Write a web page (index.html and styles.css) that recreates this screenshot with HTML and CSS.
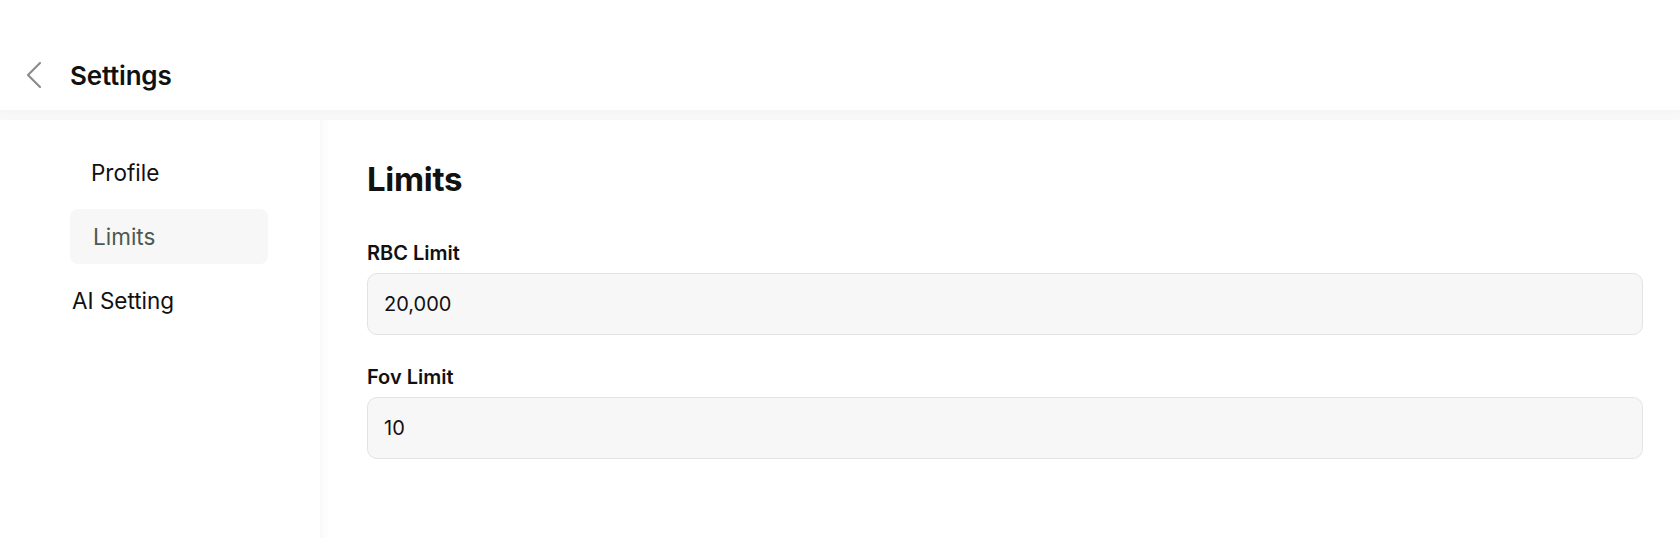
FILE: index.html
```html
<!DOCTYPE html>
<html lang="en">

<head>
    <meta charset="UTF-8">
    <meta name="viewport" content="width=device-width, initial-scale=1.0">
    <title>Settings</title>
    <link rel="stylesheet" href="styles.css">
</head>

<body>

    <header class="topbar">
        <div class="topbar-row">
            <button class="back-btn" aria-label="Back">
                <svg width="18" height="28" viewBox="0 0 18 28" fill="none">
                    <path d="M15 2 L3 14 L15 26" stroke="#8c8c8c" stroke-width="2.2" stroke-linecap="round" stroke-linejoin="round" />
                </svg>
            </button>
            <h1 class="page-title">Settings</h1>
        </div>
    </header>

    <div class="layout">
        <nav class="sidebar">
            <ul class="menu">
                <li class="menu-item sub">Profile</li>
                <li class="menu-item sub active">Limits</li>
                <li class="menu-item">AI Setting</li>
            </ul>
        </nav>

        <main class="content">
            <h2 class="section-title">Limits</h2>

            <div class="field">
                <label for="rbc">RBC Limit</label>
                <input type="text" id="rbc" value="20,000">
            </div>

            <div class="field">
                <label for="fov">Fov Limit</label>
                <input type="text" id="fov" value="10">
            </div>
        </main>
    </div>

</body>

</html>
```

FILE: styles.css
```css
* {
    box-sizing: border-box;
}

body {
    margin: 0;
    height: 538px;
    overflow: hidden;
    background-color: #f8f8f8;
    font-family: Inter, "Noto Sans", sans-serif;
    color: #111;
    display: flex;
    flex-direction: column;
}

.topbar {
    height: 110px;
    background-color: white;
    box-shadow: 0 2px 6px rgba(0, 0, 0, 0.02);
    padding-top: 50px;
    padding-left: 24px;
}

.topbar-row {
    display: flex;
    align-items: center;
    height: 50px;
}

.back-btn {
    border: none;
    background: none;
    padding: 0;
    width: 20px;
    height: 30px;
    display: flex;
    align-items: center;
    justify-content: center;
    margin-right: 26px;
}

.page-title {
    margin: 0;
    font-size: 26px;
    font-weight: 600;
    letter-spacing: -0.2px;
}

.layout {
    flex: 1;
    display: flex;
    margin-top: 10px;
}

.sidebar {
    width: 320px;
    background-color: white;
    padding-top: 25px;
    padding-left: 70px;
}

.menu {
    list-style: none;
    margin: 0;
    padding: 0;
    width: 198px;
    display: flex;
    flex-direction: column;
    gap: 9px;
}

.menu-item {
    height: 55px;
    display: flex;
    align-items: center;
    font-size: 22.5px;
    padding-left: 2px;
}

.menu-item.sub {
    padding-left: 21px;
}

.menu-item.active {
    background-color: #f7f7f7;
    border-radius: 8px;
    color: #4b5a52;
    padding-left: 23px;
}

.content {
    flex: 1;
    background-color: white;
    box-shadow: inset 9px 0 8px -7px rgba(0, 0, 0, 0.04);
    padding: 40px 37px 0 47px;
}

.section-title {
    margin: 0 0 43px 0;
    font-size: 33px;
    line-height: 38px;
    font-weight: 700;
    letter-spacing: -0.3px;
}

.field {
    display: flex;
    flex-direction: column;
    margin-bottom: 30px;
}

.field label {
    font-size: 20px;
    line-height: 24px;
    font-weight: 600;
    margin-bottom: 8px;
}

.field input {
    height: 62px;
    border: 1px solid #e3e3e3;
    border-radius: 10px;
    background-color: #f7f7f7;
    padding: 0 16px;
    font-family: inherit;
    font-size: 20px;
    color: #111;
    outline: none;
}
```
